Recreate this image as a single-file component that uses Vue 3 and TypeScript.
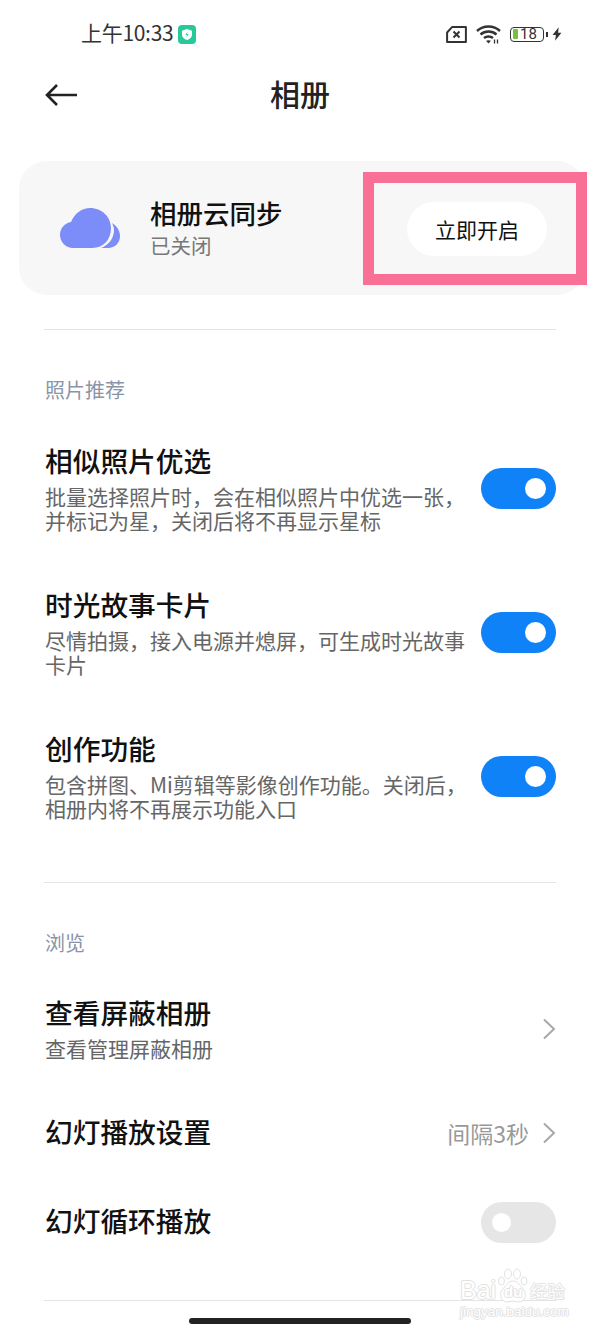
<template>
  <div class="page">
    <div class="status">
      <div class="status-left">
        <span class="time">上午10:33</span>
        <svg class="shield" width="18" height="19" viewBox="0 0 18 19">
          <rect width="18" height="19" rx="4" fill="#25c99a" />
          <path d="M9 4l5 1.800v3.700c0 2.900-2.200 4.600-5 5.500-2.800-.9-5-2.600-5-5.500V5.800z" fill="#fff" />
          <path d="M9.600 6.500 7.500 10H9l-.5 2.300 2-3.300H9z" fill="#25c99a" />
        </svg>
      </div>
      <div class="status-right">
        <svg class="sim" width="21" height="17" viewBox="0 0 21 17" fill="none">
          <path d="M6 1.100h13.900v14.800H1.100V6.500z" stroke="#333" stroke-width="2" stroke-linejoin="round" />
          <path d="M7.500 5.500l6 6m0-6l-6 6" stroke="#333" stroke-width="2" />
        </svg>
        <svg class="wifi" width="25" height="20" viewBox="0 0 25 20" fill="none" stroke="#333" stroke-width="2.400">
          <path d="M1 7c6.500-6 16.500-6 23 0" />
          <path d="M4.500 10.500c4.500-4 11.500-4 16 0" />
          <path d="M8 14c2.500-2 6.500-2 9 0" />
          <path d="M10 16.800l2.500 2.700 2.500-2.700c-1.500-.9-3.500-.9-5 0z" fill="#333" stroke="none" />
          <path d="M18.500 15.500v4M21.500 15.500v4" stroke-width="1.300" />
        </svg>
        <div class="battery">
          <div class="battery-body"><i class="battery-fill"></i><span>18</span></div>
          <i class="battery-tip"></i>
        </div>
        <svg class="bolt" width="10" height="14" viewBox="0 0 9 12"><path d="M6 0 .5 6.800h3L2.800 12 8.500 4.800h-3z" fill="#333" /></svg>
      </div>
    </div>

    <div class="nav">
      <svg class="back" width="32" height="24" viewBox="0 0 32 24" fill="none" stroke="#222" stroke-width="2.600">
        <path d="M12 2 2 12l10 10M2 12h30" />
      </svg>
      <span class="nav-title">相册</span>
    </div>

    <div class="cloud-card">
      <svg class="cloud" width="60" height="40" viewBox="0 0 60 40">
        <path d="M13 40C6 40 0 34 0 27c0-7 5-12 11-13C15 5 22 0 30 0c12 0 21 9 21 20 0 11-7 20-19 20z" fill="#7c8cf8" />
        <path d="M52 15c5 3 8 8 8 13 0 7-5 12-12 12h-7c8-3 13-10 13-18 0-2-1-5-2-7z" fill="#7c8cf8" />
      </svg>
      <div class="cloud-text">
        <div class="cloud-title">相册云同步</div>
        <div class="cloud-sub">已关闭</div>
      </div>
      <div class="open-btn">立即开启</div>
      <div class="highlight"></div>
    </div>

    <div class="rule first"></div>

    <div class="section-label">照片推荐</div>
    <div class="toggle-list">
      <div v-for="row in toggles" :key="row.title" class="toggle-row">
        <div class="row-text">
          <div class="row-title">{{ row.title }}</div>
          <div class="row-desc">{{ row.line1 }}<br />{{ row.line2 }}</div>
        </div>
        <div class="switch on"><i></i></div>
      </div>
    </div>

    <div class="rule second"></div>

    <div class="section-label">浏览</div>
    <div class="browse-row hidden-albums">
      <div class="row-text">
        <div class="row-title">查看屏蔽相册</div>
        <div class="row-desc">查看管理屏蔽相册</div>
      </div>
      <svg class="chevron" width="14" height="22" viewBox="0 0 14 22" fill="none" stroke="#a8a8a8" stroke-width="2">
        <path d="M2 1.500 12 11 2 20.500" />
      </svg>
    </div>
    <div class="browse-row slideshow">
      <div class="row-text">
        <div class="row-title">幻灯播放设置</div>
      </div>
      <div class="row-end">
        <span class="row-value">间隔3秒</span>
        <svg class="chevron" width="14" height="22" viewBox="0 0 14 22" fill="none" stroke="#a8a8a8" stroke-width="2">
          <path d="M2 1.500 12 11 2 20.500" />
        </svg>
      </div>
    </div>
    <div class="browse-row loop">
      <div class="row-text">
        <div class="row-title">幻灯循环播放</div>
      </div>
      <div class="switch"><i></i></div>
    </div>

    <div class="rule third"></div>
    <div class="home-bar"></div>

    <div class="watermark">
      <div class="wm-main">
        <span class="wm-bai">Bai</span>
        <div class="wm-paw">
          <svg width="32" height="35" viewBox="0 0 32 35" fill="#fff" stroke="#e2e2e2" stroke-width="1">
            <ellipse cx="11" cy="6" rx="3.500" ry="5" />
            <ellipse cx="20" cy="6" rx="3.500" ry="5" />
            <ellipse cx="4.500" cy="13" rx="3" ry="4" />
            <ellipse cx="27" cy="13" rx="3" ry="4" />
            <path d="M16 13c5 0 7 5 11 9 3 4 1 12-5 12-2 0-4-1-6-1s-4 1-6 1c-6 0-8-8-5-12 4-4 6-9 11-9z" />
          </svg>
          <span class="wm-du">du</span>
        </div>
        <span class="wm-jy">经验</span>
      </div>
      <div class="wm-url">jingyan.baidu.com</div>
    </div>
  </div>
</template>

<script setup lang="ts">
const toggles = [
  {
    title: "相似照片优选",
    line1: "批量选择照片时，会在相似照片中优选一张，",
    line2: "并标记为星，关闭后将不再显示星标",
  },
  {
    title: "时光故事卡片",
    line1: "尽情拍摄，接入电源并熄屏，可生成时光故事",
    line2: "卡片",
  },
  {
    title: "创作功能",
    line1: "包含拼图、Mi剪辑等影像创作功能。关闭后，",
    line2: "相册内将不再展示功能入口",
  },
];
</script>

<style>
html,
body {
  margin: 0;
  background: #fff;
}
</style>

<style scoped>
.page {
  position: relative;
  width: 600px;
  height: 1333px;
  overflow: hidden;
  background: #fff;
  font-family: "Noto Sans CJK SC", "Noto Sans", sans-serif;
  color: #111;
}

.status {
  display: flex;
  justify-content: space-between;
  align-items: center;
  height: 20px;
  padding: 24px 38px 0 81px;
}

.status-left {
  display: flex;
  align-items: center;
  gap: 5px;
}

.time {
  position: relative;
  top: -2px;
  font-size: 21px;
  line-height: 20px;
  color: #333;
  letter-spacing: -0.3px;
}

.status-right {
  display: flex;
  align-items: center;
}

.wifi {
  margin-left: 9px;
}

.battery {
  display: flex;
  align-items: center;
  gap: 2px;
  margin-left: 9px;
}

.bolt {
  margin-left: 4px;
}

.battery-body {
  display: flex;
  align-items: center;
  gap: 2px;
  box-sizing: border-box;
  width: 34px;
  height: 15px;
  padding-left: 2px;
  border: 1.500px solid #333;
  border-radius: 4px;
  font-size: 15px;
  line-height: 12px;
  color: #333;
  font-family: "Roboto", sans-serif;
}

.battery-fill {
  width: 5px;
  height: 10px;
  background: #74c23a;
  border-radius: 1px;
}

.battery-tip {
  width: 2px;
  height: 5px;
  background: #333;
}

.nav {
  position: relative;
  display: flex;
  justify-content: center;
  height: 44px;
  margin-top: 29px;
}

.back {
  position: absolute;
  left: 45px;
  top: 10px;
}

.nav-title {
  height: 40px;
  font-size: 30px;
  line-height: 40px;
  font-weight: 500;
  color: #222;
}

.cloud-card {
  position: relative;
  display: flex;
  align-items: center;
  box-sizing: border-box;
  width: 566px;
  height: 134px;
  margin: 44px 0 0 19px;
  padding-left: 41px;
  background: #f7f7f7;
  border-radius: 28px;
}

.cloud-text {
  margin-left: 30px;
  padding-bottom: 3px;
}

.cloud-title {
  font-size: 26.500px;
  line-height: 36px;
  font-weight: 500;
  color: #111;
}

.cloud-sub {
  font-size: 20.500px;
  line-height: 28px;
  color: #777;
}

.open-btn {
  position: absolute;
  left: 388px;
  top: 41px;
  width: 140px;
  height: 54px;
  border-radius: 27px;
  background: #fff;
  font-size: 21px;
  line-height: 54px;
  text-align: center;
  color: #111;
}

.highlight {
  position: absolute;
  left: 344px;
  top: 11px;
  box-sizing: border-box;
  width: 224px;
  height: 113px;
  border: 11px solid #f87096;
}

.rule {
  height: 1px;
  margin: 0 44px;
  background: #e4e4e4;
}

.rule.first {
  margin-top: 34px;
}

.rule.second {
  margin-top: 34px;
}

.rule.third {
  margin-top: 35px;
}

.section-label {
  margin: 47px 45px 0;
  font-size: 20px;
  line-height: 26px;
  color: #8a94a8;
}

.toggle-list {
  margin-top: 13px;
}

.toggle-row {
  display: flex;
  justify-content: space-between;
  align-items: center;
  height: 144px;
  padding: 0 44px 0 45px;
}

.row-text {
  padding-bottom: 4px;
}

.hidden-albums .row-text {
  padding-bottom: 6px;
}

.row-title {
  font-size: 27.700px;
  line-height: 38px;
  font-weight: 500;
  color: #111;
}

.row-desc {
  margin-top: 5px;
  font-size: 21px;
  line-height: 24px;
  color: #666;
  white-space: nowrap;
}

.switch {
  position: relative;
  flex: none;
  width: 75px;
  height: 41px;
  border-radius: 21px;
  background: #e6e6e6;
}

.switch i {
  position: absolute;
  left: 11px;
  top: 11px;
  width: 19px;
  height: 19px;
  border-radius: 50%;
  background: #fff;
}

.switch.on {
  background: #0f82f8;
}

.switch.on i {
  left: 44px;
  top: 10px;
  width: 21px;
  height: 21px;
}

.browse-row {
  display: flex;
  justify-content: space-between;
  align-items: center;
  padding: 0 44px 0 45px;
}

.hidden-albums {
  height: 90px;
  margin-top: 28px;
}

.slideshow {
  height: 80px;
  margin-top: 19px;
}

.loop {
  height: 86px;
  margin-top: 6px;
}

.row-end {
  display: flex;
  align-items: center;
  gap: 13px;
}

.row-value {
  font-size: 23px;
  color: #999;
}

.home-bar {
  position: absolute;
  left: 189px;
  top: 1318px;
  width: 222px;
  height: 6px;
  border-radius: 3px;
  background: #222;
}

.watermark {
  position: absolute;
  left: 460px;
  top: 1268px;
  color: #fff;
  font-family: "Liberation Sans", sans-serif;
  text-shadow: 1px 0 0 #e2e2e2, -1px 0 0 #e2e2e2, 0 1px 0 #e2e2e2, 0 -1px 0 #e2e2e2;
}

.wm-main {
  display: flex;
  align-items: flex-end;
  height: 35px;
}

.wm-bai {
  width: 37px;
  font-size: 25px;
  line-height: 26px;
}

.wm-paw {
  position: relative;
  width: 32px;
  height: 35px;
}

.wm-paw svg {
  display: block;
}

.wm-du {
  position: absolute;
  left: 7px;
  bottom: 3px;
  font-size: 15px;
  line-height: 16px;
  font-weight: 700;
}

.wm-jy {
  margin-left: 1px;
  font-family: "Noto Sans CJK SC", sans-serif;
  font-size: 17.500px;
  line-height: 24px;
}

.wm-url {
  margin-top: 1px;
  font-size: 13.500px;
  line-height: 16px;
  white-space: nowrap;
}
</style>
